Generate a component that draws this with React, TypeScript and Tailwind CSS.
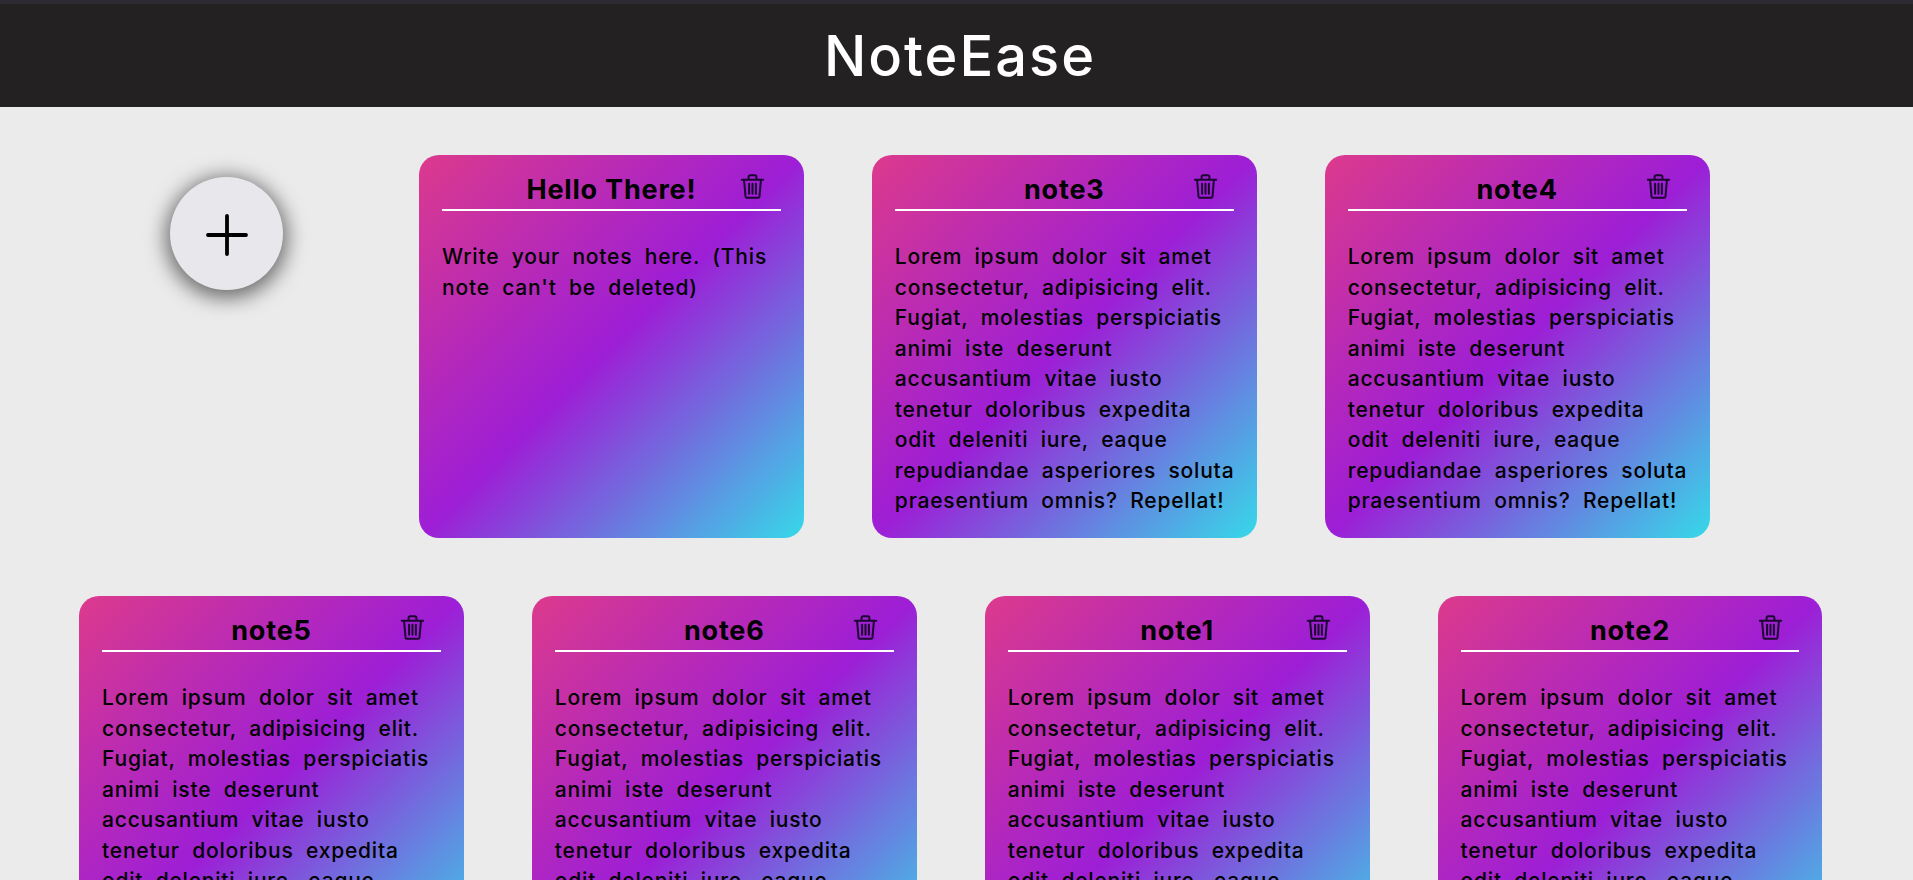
const lorem =
  'Lorem ipsum dolor sit amet consectetur, adipisicing elit. Fugiat, molestias perspiciatis animi iste deserunt accusantium vitae iusto tenetur doloribus expedita odit deleniti iure, eaque repudiandae asperiores soluta praesentium omnis? Repellat!';

const notes = [
  { title: 'Hello There!', body: "Write your notes here. (This note can't be deleted)" },
  { title: 'note3', body: lorem },
  { title: 'note4', body: lorem },
  { title: 'note5', body: lorem },
  { title: 'note6', body: lorem },
  { title: 'note1', body: lorem },
  { title: 'note2', body: lorem },
];

function TrashIcon() {
  return (
    <svg viewBox="0 0 24 24" fill="none" stroke="currentColor" strokeWidth="1.8" strokeLinejoin="round" className="w-[27px] h-[27px]">
      <path d="M2.5 6h19" strokeLinecap="round" />
      <path d="M8.5 6V3.6c0-.9.6-1.6 1.5-1.6h4c.9 0 1.5.7 1.500 1.6V6" />
      <path d="M4.5 6l1.3 15c.1.6.5 1 1.1 1h10.2c.6 0 1-.4 1.1-1L19.500 6" />
      <path d="M9 9.500v9M12 9.500v9M15 9.500v9" strokeLinecap="round" />
    </svg>
  );
}

function NoteCard({ title, body }: { title: string; body: string }) {
  return (
    <div className="w-[384.85px] h-[383px] shrink-0 rounded-[20px] px-[23px] bg-[linear-gradient(135deg,#dc3a8c_0%,#9d1ed6_50%,#36d9e9_100%)] text-black">
      <div className="relative flex justify-center items-end h-[56px] border-b-2 border-white">
        <h2 className="text-[27px] leading-[40px] font-bold tracking-[0.8px] mb-[-1px]">{title}</h2>
        <button className="absolute right-[15px] top-[18px] text-[#1c0733]">
          <TrashIcon />
        </button>
      </div>
      {/* slight negative margin so the long lines wrap like the reference */}
      <p className="mt-[31px] mr-[-8px] text-[21px] font-medium leading-[30.5px] tracking-[0.8px] [word-spacing:6px]">{body}</p>
    </div>
  );
}

export default function App() {
  return (
    <div className="min-h-screen bg-[#ebebeb] font-['Inter',sans-serif] overflow-hidden h-[880px]">
      <header className="h-[107px] bg-[#232122] border-t-[4px] border-[#2b2a33] flex items-center justify-center pl-[7px]">
        <h1 className="text-white text-[56px] font-medium tracking-[2px]">NoteEase</h1>
      </header>
      <main className="flex flex-wrap gap-x-[68px] gap-y-[58px] pl-[79px] pt-[48px]">
        <div className="w-[272px] pl-[91px] pt-[22px]">
          <button className="w-[113px] h-[113px] rounded-full bg-[#e8e8ec] flex items-center justify-center shadow-[0_4px_20px_4px_rgba(0,0,0,0.55)]">
            <svg viewBox="0 0 44 44" className="w-[44px] h-[44px] mt-[3px]" stroke="black" strokeWidth="3.8" strokeLinecap="round">
              <path d="M22 3v38M3 22h38" />
            </svg>
          </button>
        </div>
        {notes.map((n) => (
          <NoteCard key={n.title} title={n.title} body={n.body} />
        ))}
      </main>
    </div>
  );
}
